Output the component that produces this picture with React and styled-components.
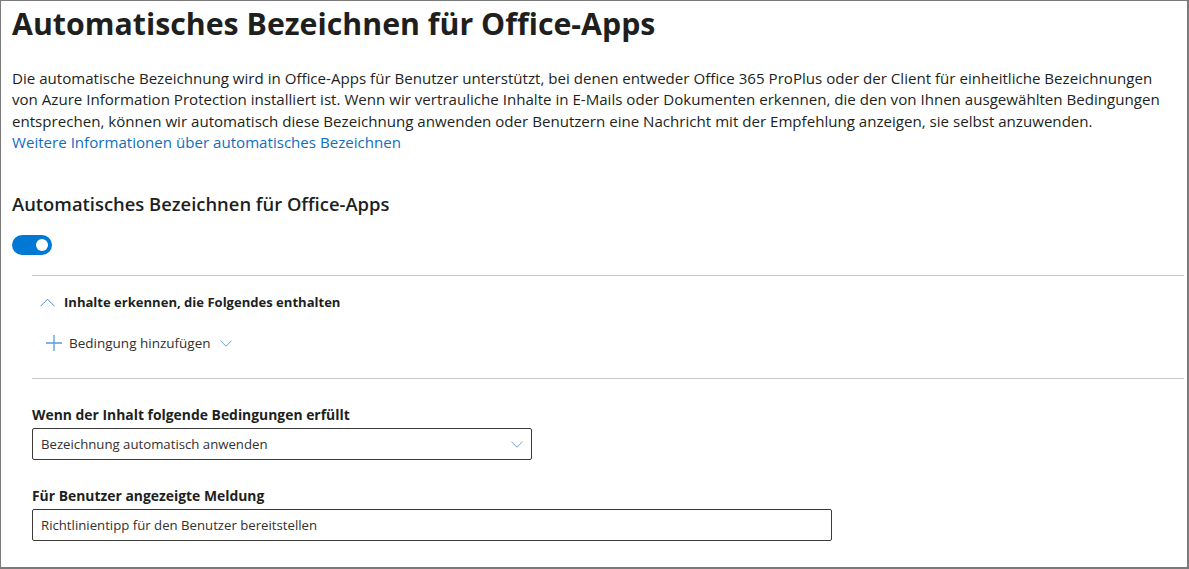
import React, { useState } from "react";
import styled, { createGlobalStyle } from "styled-components";

const GlobalStyle = createGlobalStyle`
    html, body {
        margin: 0;
        padding: 0;
        background: #ffffff;
    }
    body {
        font-family: "Open Sans", "Noto Sans", "Liberation Sans", sans-serif;
        color: #323130;
    }
    * {
        box-sizing: border-box;
    }
`;

const Frame = styled.div`
    width: 1189px;
    height: 569px;
    border: 1px solid #7a7a7a;
    border-right-width: 2px;
    border-bottom-width: 2px;
    padding: 0 3px 0 11px;
    overflow: hidden;
`;

const Title = styled.h1`
    margin: 0;
    padding-top: 5px;
    font-size: 30.3px;
    line-height: 36px;
    font-weight: 700;
    color: #201f1e;
`;

const Description = styled.p`
    margin: 26px 0 0;
    font-size: 15.1px;
    line-height: 21.3px;
    color: #201f1e;
`;

const Link = styled.a`
    color: #106ebe;
    text-decoration: none;
`;

const SectionTitle = styled.h2`
    margin: 38px 0 0;
    font-size: 18.4px;
    line-height: 26px;
    font-weight: 600;
    color: #201f1e;
`;

const Toggle = styled.button`
    display: flex;
    align-items: center;
    justify-content: ${(p) => (p.$on ? "flex-end" : "flex-start")};
    width: 40px;
    height: 20px;
    margin-top: 18px;
    padding: 0 4px;
    border: none;
    border-radius: 10px;
    background: ${(p) => (p.$on ? "#0078d4" : "#c8c6c4")};
    cursor: pointer;

    &::after {
        content: "";
        width: 12px;
        height: 12px;
        border-radius: 50%;
        background: #ffffff;
    }
`;

const Rules = styled.div`
    margin: 20px 0 0 20px;
`;

const Divider = styled.hr`
    margin: 0;
    border: none;
    border-top: 1px solid #c8c8c8;
`;

const AccordionHead = styled.div`
    display: flex;
    align-items: center;
    gap: 9px;
    height: 52px;
    padding-left: 8px;
    font-size: 13.05px;
    font-weight: 700;
    color: #201f1e;
`;

const AddButton = styled.button`
    display: flex;
    align-items: center;
    gap: 7px;
    height: 30px;
    margin: 0 0 20px 14px;
    padding: 0;
    border: none;
    background: none;
    font-family: inherit;
    font-size: 13.5px;
    color: #323130;
    cursor: pointer;

    & > svg:last-child {
        margin-left: 2px;
    }
`;

const Field = styled.div`
    margin-top: ${(p) => p.$top}px;
`;

const Label = styled.div`
    font-size: 13.9px;
    font-weight: 700;
    line-height: 18px;
    margin-bottom: 4px;
    color: #201f1e;
`;

const Box = styled.div`
    display: flex;
    align-items: center;
    justify-content: space-between;
    width: ${(p) => p.$width}px;
    height: 32px;
    padding: 0 8px 0 8px;
    border: 1px solid #3b3a39;
    border-radius: 2px;
    font-size: 13.2px;
    color: #323130;
`;

const Chevron = ({ up, size = 14 }) => (
    <svg width={size} height={size * 0.6} viewBox="0 0 16 9" fill="none">
        <path
            d={up ? "M0.5 8.5 L8 1 L15.5 8.5" : "M0.5 0.5 L8 8 L15.5 0.5"}
            stroke="#3f86d4"
            strokeWidth="1"
        />
    </svg>
);

const Plus = () => (
    <svg width="16" height="16" viewBox="0 0 16 16">
        <path d="M8 0 V16 M0 8 H16" stroke="#5b98dc" strokeWidth="1.3" />
    </svg>
);

export default function App() {
    const [on, setOn] = useState(true);

    return (
        <Frame>
            <GlobalStyle />
            <Title>Automatisches Bezeichnen für Office-Apps</Title>
            <Description>
                Die automatische Bezeichnung wird in Office-Apps für Benutzer unterstützt, bei denen entweder Office 365 ProPlus oder der Client für einheitliche Bezeichnungen
                <br />
                von Azure Information Protection installiert ist. Wenn wir vertrauliche Inhalte in E-Mails oder Dokumenten erkennen, die den von Ihnen ausgewählten Bedingungen
                <br />
                entsprechen, können wir automatisch diese Bezeichnung anwenden oder Benutzern eine Nachricht mit der Empfehlung anzeigen, sie selbst anzuwenden.
                <br />
                <Link href="#">Weitere Informationen über automatisches Bezeichnen</Link>
            </Description>
            <SectionTitle>Automatisches Bezeichnen für Office-Apps</SectionTitle>
            <Toggle $on={on} onClick={() => setOn(!on)} aria-label="Automatisches Bezeichnen" />
            <Rules>
                <Divider />
                <AccordionHead>
                    <Chevron up size={15} />
                    Inhalte erkennen, die Folgendes enthalten
                </AccordionHead>
                <AddButton>
                    <Plus />
                    Bedingung hinzufügen
                    <Chevron size={12} />
                </AddButton>
                <Divider />
                <Field $top={27}>
                    <Label>Wenn der Inhalt folgende Bedingungen erfüllt</Label>
                    <Box $width={500}>
                        Bezeichnung automatisch anwenden
                        <Chevron size={12} />
                    </Box>
                </Field>
                <Field $top={27}>
                    <Label>Für Benutzer angezeigte Meldung</Label>
                    <Box $width={800}>Richtlinientipp für den Benutzer bereitstellen</Box>
                </Field>
            </Rules>
        </Frame>
    );
}
